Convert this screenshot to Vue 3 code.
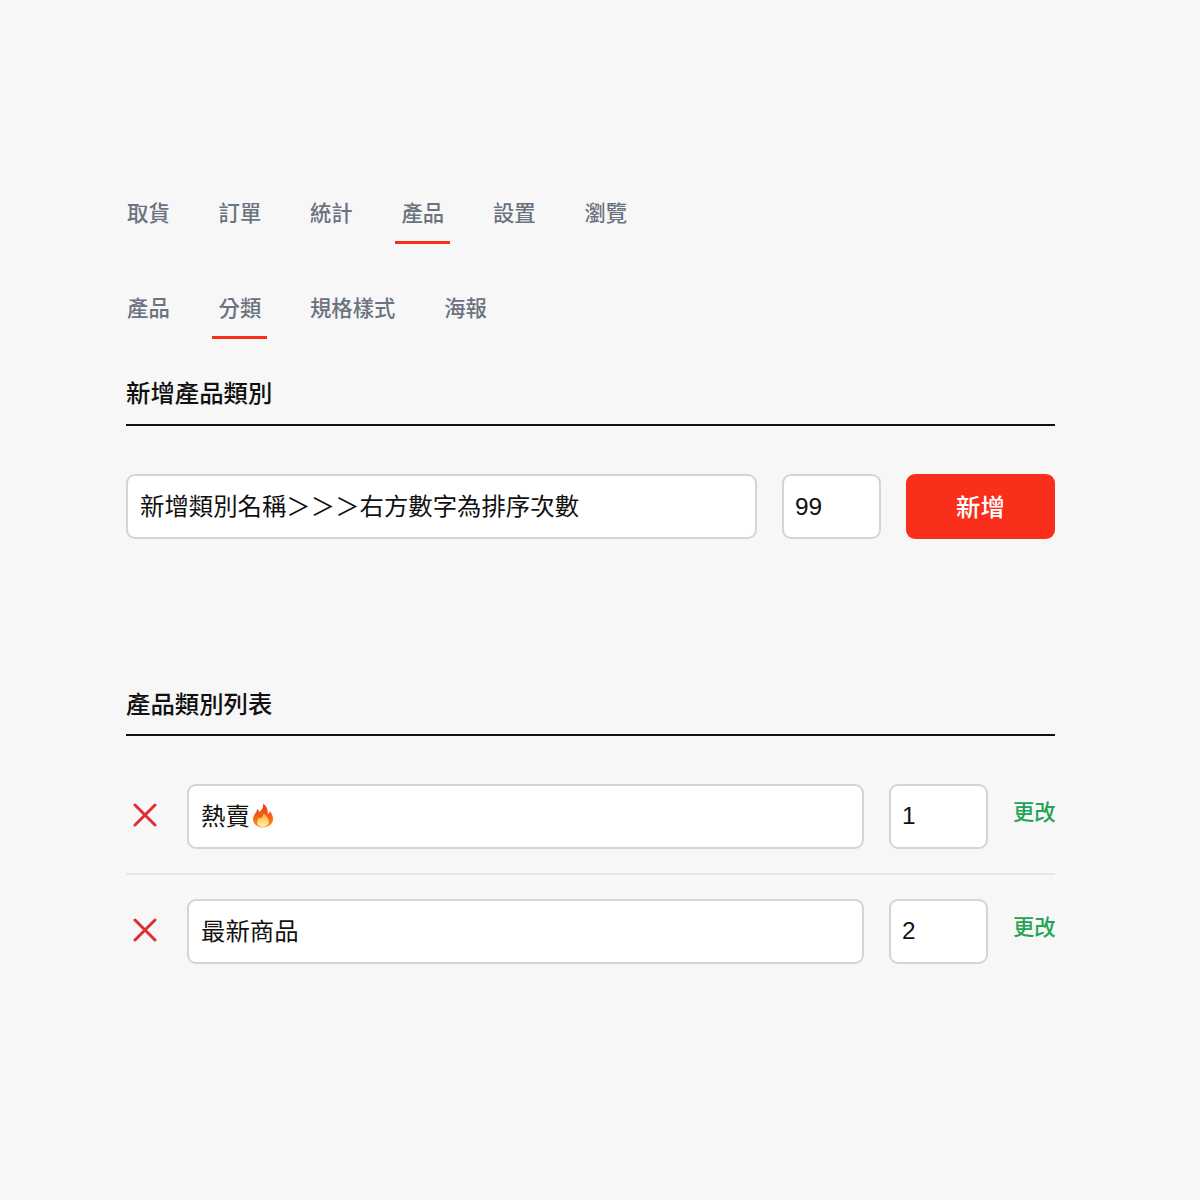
<script setup>
import { ref } from 'vue';

const mainTabs = [
  { label: '取貨' },
  { label: '訂單' },
  { label: '統計' },
  { label: '產品', active: true },
  { label: '設置' },
  { label: '瀏覽' }
];
const subTabs = [
  { label: '產品' },
  { label: '分類', active: true },
  { label: '規格樣式' },
  { label: '海報' }
];

// full width > signs, written as escapes
const namePlaceholder = '新增類別名稱\uFF1E\uFF1E\uFF1E右方數字為排序次數';
const newName = ref('');
const newOrder = ref('99');
const categories = ref([
  { id: 1, name: '熱賣', order: '1', hot: true },
  { id: 2, name: '最新商品', order: '2' }
]);
</script>

<template>
  <div class="page">
    <nav class="tabs">
      <a v-for="tab in mainTabs" :key="tab.label" class="tab" :class="{ active: tab.active }">{{ tab.label }}</a>
    </nav>
    <nav class="tabs sub">
      <a v-for="tab in subTabs" :key="tab.label" class="tab" :class="{ active: tab.active }">{{ tab.label }}</a>
    </nav>

    <h2 class="heading first">新增產品類別</h2>
    <div class="add-form">
      <input class="field name" type="text" :placeholder="namePlaceholder" v-model="newName" />
      <input class="field order" type="text" v-model="newOrder" />
      <button class="add-btn">新增</button>
    </div>

    <h2 class="heading second">產品類別列表</h2>
    <ul class="list">
      <li v-for="item in categories" :key="item.id" class="row">
        <button class="remove" aria-label="刪除">
          <svg width="24" height="24" viewBox="0 0 24 24" fill="none" stroke="#dc2e33" stroke-width="3" stroke-linecap="round">
            <path d="M2 2 22 22M22 2 2 22" />
          </svg>
        </button>
        <div class="name-wrap">
          <input class="field name" type="text" v-model="item.name" />
          <svg v-if="item.hot" class="flame" width="22" height="25" viewBox="0 0 22 25">
            <defs>
              <linearGradient id="flameOuter" x1="0" y1="0" x2="0" y2="1">
                <stop offset="0" stop-color="#e8401c" />
                <stop offset="0.6" stop-color="#f4641a" />
                <stop offset="1" stop-color="#f99a1e" />
              </linearGradient>
              <linearGradient id="flameInner" x1="0" y1="0" x2="0" y2="1">
                <stop offset="0" stop-color="#fbb02a" />
                <stop offset="1" stop-color="#fff2b0" />
              </linearGradient>
            </defs>
            <path fill="url(#flameOuter)" d="M11 0.5C12 4.5 9.5 6.5 7.5 9 7 7.5 6.2 6.6 5 6 5.4 9 1 11.500 1 16.300 1 21 5.200 24.500 11 24.500S21 21 21 15.800C21 12.500 19.300 10 17.800 8 17.600 9.500 17 10.500 15.800 11 16.200 6.500 14.500 2.500 11 0.500Z" />
            <path fill="url(#flameInner)" d="M11.500 10.500C11.800 13 9.800 14 8.300 15.800 7.800 15.200 7.500 14.800 7 14.500 6 16.300 5.200 17.500 5.200 19.200 5.200 22 8 23.800 11 23.800S16.800 22 16.800 19C16.800 15.500 14.500 12.500 11.500 10.500Z" />
          </svg>
        </div>
        <input class="field order" type="text" v-model="item.order" />
        <a class="update">更改</a>
      </li>
    </ul>
  </div>
</template>

<style scoped>
.page {
  width: 929px;
  margin-left: 126px;
  padding-top: 198px;
  font-family: "Liberation Sans", "Noto Sans CJK TC", sans-serif;
  color: #111111;
}

.tabs {
  display: flex;
  gap: 36.6px;
  margin-left: -5px;
}

.tabs.sub {
  margin-top: 49px;
}

.tab {
  padding: 0 6.1px 11px;
  border-bottom: 3px solid transparent;
  font-size: 21.35px;
  line-height: 32px;
  font-weight: 500;
  color: #6b7280;
}

.tab.active {
  border-bottom-color: #f92f1b;
}

.heading {
  margin: 0;
  padding-bottom: 14px;
  border-bottom: 2px solid #111111;
  font-size: 24.4px;
  line-height: 32px;
  font-weight: 500;
  color: #111111;
}

.heading.first {
  margin-top: 39px;
}

.heading.second {
  margin-top: 150px;
  padding-bottom: 13px;
}

.add-form {
  display: flex;
  gap: 25px;
  margin-top: 48px;
}

.field {
  box-sizing: border-box;
  height: 65px;
  padding: 0 12px;
  border: 2px solid #d1d5db;
  border-radius: 9px;
  background: #ffffff;
  font-family: inherit;
  font-size: 24.4px;
  color: #111111;
  outline: none;
}

.field::placeholder {
  color: #111111;
  opacity: 1;
}

.name {
  flex: 1;
  min-width: 0;
  width: 100%;
}

.order {
  flex: none;
  width: 99px;
  padding-left: 11px;
}

.row .order {
  padding-bottom: 2px;
}

.row .name {
  padding-bottom: 4px;
}

.add-btn {
  flex: none;
  width: 149px;
  height: 65px;
  padding: 0 0 2px;
  border: none;
  border-radius: 9px;
  background: #f92f1b;
  color: #ffffff;
  font-family: inherit;
  font-size: 24.4px;
  font-weight: 500;
}

.list {
  list-style: none;
  margin: 48px 0 0;
  padding: 0;
}

.row {
  display: flex;
  align-items: center;
  gap: 25px;
  padding-bottom: 24px;
  margin-bottom: 24px;
  border-bottom: 2px solid #e5e7eb;
}

.row:last-child {
  border-bottom: none;
}

.remove {
  flex: none;
  width: 36px;
  padding: 0 0 4px 1px;
  border: none;
  background: none;
  display: flex;
  justify-content: center;
}

.name-wrap {
  position: relative;
  flex: 1;
  min-width: 0;
  display: flex;
}

.flame {
  position: absolute;
  left: 65px;
  top: 19px;
}

.update {
  flex: none;
  width: 42px;
  margin-bottom: 8px;
  white-space: nowrap;
  font-size: 21.35px;
  line-height: 32px;
  font-weight: 500;
  color: #23a455;
}
</style>

<style>
body {
  background: #f7f7f7;
}
</style>
